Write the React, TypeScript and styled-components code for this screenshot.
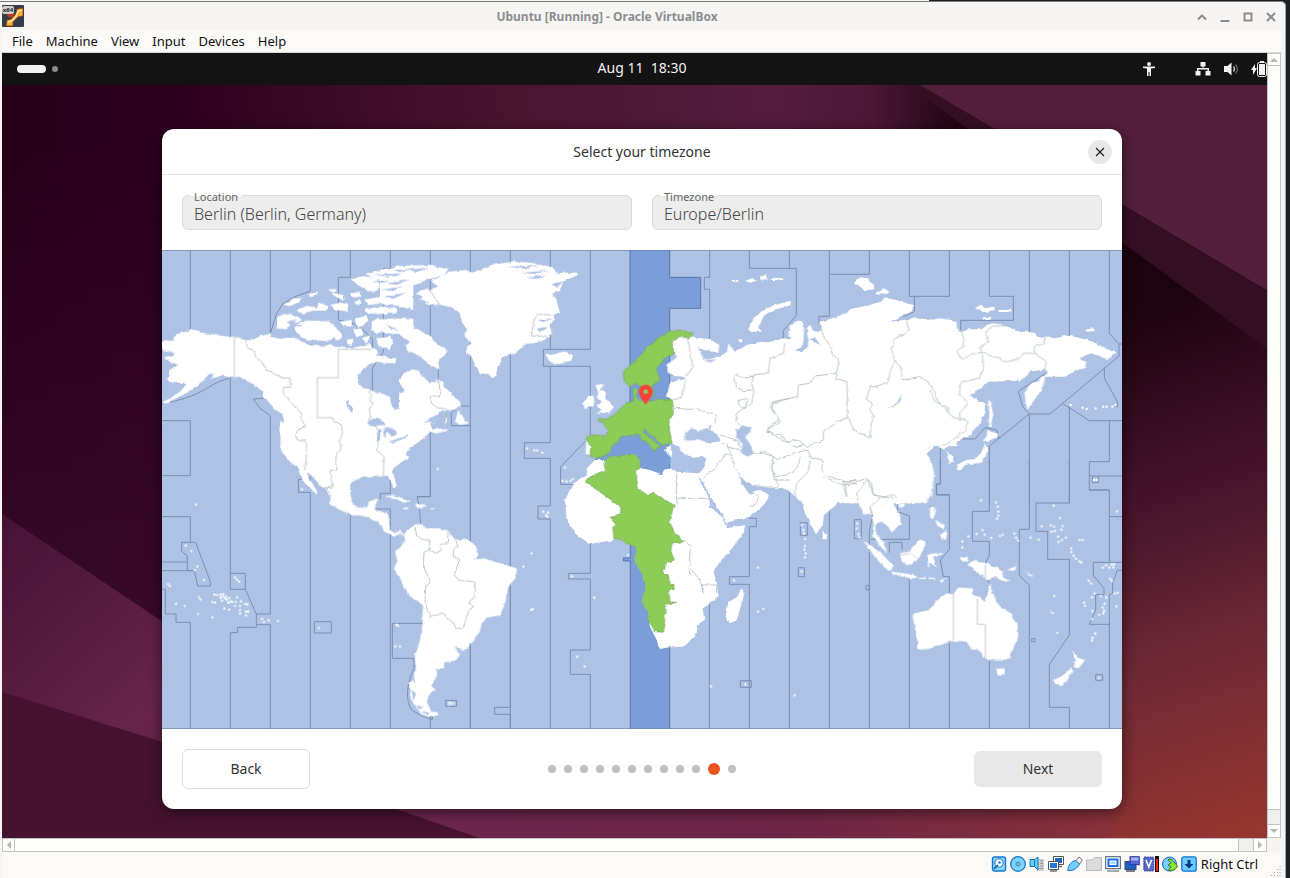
import React from "react";
import styled, { createGlobalStyle } from "styled-components";

const Global = createGlobalStyle`
  * { box-sizing: border-box; }
  html, body, #root { height: 100%; }
  body { margin: 0; background: #1d1f20; font-family: "Noto Sans", "Open Sans", sans-serif; }
  button, input { font: inherit; color: inherit; }
`;

const Backdrop = styled.div`
  min-height: 100vh;
  display: flex;
  padding: 1px 4px 0 0;
  background: linear-gradient(90deg, #f6f5f4 72%, #1d1f20 72%) top / 100% 1px no-repeat #1d1f20;
`;

const Window = styled.main`
  flex: 1;
  min-width: 0;
  display: flex;
  flex-direction: column;
  padding: 0 4px 0 2px;
  background: #f6f5f4;
  border-top: 1px solid #7b7b7a;
  border-right: 1px solid #a5a5a3;
  border-radius: 0 5px 0 0;
`;

const TitleBar = styled.header`
  height: 28px;
  display: grid;
  grid-template-columns: 80px 1fr 80px;
  align-items: center;
  padding-right: 3px;
  color: #8b8e8f;
`;

const AppIcon = styled.svg`
  width: 22px;
  height: 22px;
  display: block;
`;

const WindowTitle = styled.h1`
  margin: 0;
  font-size: 12px;
  line-height: 16px;
  font-weight: 700;
  text-align: center;
  padding: 2px 66px 0 0;
`;

const WindowButtons = styled.div`
  display: flex;
  justify-content: flex-end;
  gap: 9px;
  padding-top: 1px;
`;

const IconButton = styled.button<{ $size: number }>`
  width: ${(p) => p.$size}px;
  height: ${(p) => p.$size}px;
  flex: none;
  padding: 0;
  border: 0;
  background: none;
  display: grid;
  place-items: center;
  svg { display: block; width: 100%; height: 100%; }
`;

const MenuBar = styled.nav`
  height: 23px;
  display: flex;
  align-items: center;
  gap: 13px;
  padding-left: 10px;
  background: #fbfaf8;
  border-bottom: 1px solid #d5dad6;
  color: #111;
`;

const MenuItem = styled.button`
  border: 0;
  padding: 0;
  background: none;
  font-size: 13px;
  line-height: 18px;
`;

const Viewport = styled.div`
  flex: 1;
  display: grid;
  grid-template-columns: 1fr 14px;
  grid-template-rows: 1fr 14px;
`;

const Guest = styled.section`
  position: relative;
  overflow: hidden;
  min-width: 0;
  min-height: 0;
`;

const Screen = styled.div`
  width: calc(100% + 15px);
  height: calc(100% + 15px);
  display: flex;
  flex-direction: column;
`;

const TopBar = styled.div`
  height: 32px;
  flex: none;
  display: grid;
  grid-template-columns: 1fr auto 1fr;
  align-items: center;
  padding: 0 15px;
  background: #131313;
  color: #f2f2f2;
`;

const Workspaces = styled.div`
  display: flex;
  align-items: center;
  gap: 6px;
`;

const WorkspaceMark = styled.span<{ $active?: boolean }>`
  width: ${(p) => (p.$active ? 29 : 6)}px;
  height: ${(p) => (p.$active ? 8 : 6)}px;
  border-radius: 4px;
  background: ${(p) => (p.$active ? "#f2f2f2" : "#8a8a8a")};
`;

const Clock = styled.time`
  font-size: 14px;
  line-height: 20px;
  padding-bottom: 2px;
  white-space: pre;
`;

const Indicators = styled.div`
  display: flex;
  justify-content: flex-end;
  align-items: center;
  gap: 12px;
  svg { width: 16px; height: 16px; display: block; fill: #f2f2f2; }
  svg:first-child { margin-right: 26px; }
`;

const Desktop = styled.div`
  position: relative;
  flex: 1;
  display: flex;
  align-items: center;
  justify-content: center;
  background: #45132f;
`;

const Wallpaper = styled.svg`
  position: absolute;
  inset: 0;
  width: 100%;
  height: 100%;
`;

const Dialog = styled.form`
  position: relative;
  width: 75%;
  background: #fff;
  border-radius: 12px;
  color: #333;
  box-shadow: 0 3px 14px rgba(0, 0, 0, 0.55);
  overflow: hidden;
`;

const DialogHeader = styled.header`
  height: 46px;
  display: grid;
  grid-template-columns: 24px 1fr 24px;
  align-items: center;
  padding: 0 10px;
  border-bottom: 1px solid #e2e2e2;
`;

const DialogTitle = styled.h2`
  grid-column: 2;
  margin: 0;
  text-align: center;
  font-size: 14px;
  line-height: 20px;
  font-weight: 400;
`;

const CloseButton = styled(IconButton)`
  border-radius: 50%;
  background: #e8e8e8;
  svg { width: 10px; height: 10px; }
`;

const Fields = styled.div`
  display: grid;
  grid-template-columns: 1fr 1fr;
  gap: 20px;
  padding: 20px;
`;

const Field = styled.fieldset`
  position: relative;
  margin: 0;
  padding: 0;
  border: 0;
  height: 35px;
  min-width: 0;
`;

const FieldLabel = styled.label`
  position: absolute;
  left: 8px;
  top: -6px;
  padding: 0 4px;
  font-size: 11px;
  line-height: 16px;
  color: #666;
  background: linear-gradient(#fff 7px, transparent 7px);
`;

const FieldInput = styled.input`
  display: block;
  width: 100%;
  height: 35px;
  padding: 2px 11px 0;
  border: 1px solid #dadada;
  border-radius: 6px;
  background: #ededed;
  font-size: 16px;
  font-weight: 300;
  line-height: 20px;
  color: #444;
  outline: 0;
`;

const Map = styled.svg`
  display: block;
  width: 100%;
  height: auto;
`;

const Footer = styled.footer`
  height: 80px;
  display: grid;
  grid-template-columns: 128px 1fr 128px;
  align-items: center;
  padding: 0 20px;
`;

const ActionButton = styled.button<{ $filled?: boolean }>`
  height: ${(p) => (p.$filled ? 36 : 40)}px;
  border: ${(p) => (p.$filled ? "0" : "1px solid #dcdcdc")};
  border-radius: 6px;
  background: ${(p) => (p.$filled ? "#e8e8e8" : "#fff")};
  font-size: 14px;
  line-height: 20px;
`;

const Steps = styled.div`
  display: flex;
  justify-content: center;
  align-items: center;
  gap: 8px;
`;

const Step = styled.span<{ $current?: boolean }>`
  width: ${(p) => (p.$current ? 12 : 8)}px;
  height: ${(p) => (p.$current ? 12 : 8)}px;
  border-radius: 50%;
  background: ${(p) => (p.$current ? "#e95420" : "#c0c0c0")};
`;

const ScrollTrack = styled.div<{ $vertical?: boolean }>`
  display: flex;
  flex-direction: ${(p) => (p.$vertical ? "column" : "row")};
  background: #efefee;
  border: 1px solid #c3c3c2;
  min-width: 0;
`;

const ScrollThumb = styled.div`
  flex: 1;
  background: #fdfdfc;
`;

const ScrollGap = styled.div<{ $vertical?: boolean }>`
  flex: none;
  width: ${(p) => (p.$vertical ? "auto" : "16px")};
  height: ${(p) => (p.$vertical ? "16px" : "auto")};
  border: 0 solid #c3c3c2;
  border-width: ${(p) => (p.$vertical ? "1px 0" : "0 1px")};
`;

const ScrollArrow = styled.button<{ $dir: "up" | "down" | "left" | "right" }>`
  flex: none;
  width: 12px;
  height: 12px;
  padding: 0;
  border: 0 solid #c3c3c2;
  border-width: ${(p) => (p.$dir === "up" ? "0 0 1px" : p.$dir === "left" ? "0 1px 0 0" : "0")};
  background: #fdfdfc;
  display: grid;
  place-items: center;
  svg {
    width: 8px;
    height: 8px;
    fill: #b5b5b4;
    transform: rotate(${(p) => ({ up: 0, right: 90, down: 180, left: 270 })[p.$dir]}deg);
  }
`;

const StatusBar = styled.footer`
  height: 26px;
  display: flex;
  align-items: center;
  justify-content: flex-end;
  gap: 3px;
  padding: 0 0 2px 0;
  background: #fbfaf8;
  font-size: 13px;
  line-height: 18px;
  color: #111;
`;

const HostKey = styled.span`
  padding: 0 10px 0 1px;
`;

const Grip = styled.svg`
  width: 10px;
  height: 10px;
  align-self: flex-end;
`;

function Arrow({ dir, label }: { dir: "up" | "down" | "left" | "right"; label: string }) {
  return (
    <ScrollArrow type="button" $dir={dir} aria-label={label}>
      <svg viewBox="0 0 8 8"><path d="M0 6L4 2l4 4z" /></svg>
    </ScrollArrow>
  );
}

function Dots({ points }: { points: string }) {
  const d = points.trim().split(/\s+/).map((p) => `M${p}h0`).join("");
  return <path d={d} stroke="#fff" strokeWidth={7} strokeLinecap="round" fill="none" />;
}

const OCEAN = "#adc2e5";

function ZoneLines() {
  return (
    <g fill="none" stroke="#7c8fb2" strokeWidth={3}>
      <path d="M0 1H2880M0 1436H2880" />
      <g transform="translate(-6 0)">
        <path d="M91 0V242M211 0V260M331 0V250L350 190 368 162 400 142 451 123V0M571 0V82H535V210L575 218 605 235 637 268V298M691 0V55H670V305L637 355V420" />
        <path d="M6 462C60 450 100 440 140 415L180 393 211 384V970M6 512H91V677H6M280 447L300 475 331 497V1092M280 447L310 445M451 660V688H415V727H451V1437M6 282L30 270" />
      </g>
      <g transform="translate(-6 690)">
        <path d="M6 110H91V187M65 187H107L151 305V318H113L103 272H82V228L65 213ZM6 246H82M6 272H103M6 328H16V402H48V427H91V747M211 280H256V328H211V280M256 328L289 402H331M289 402V434H331V747M289 434V442H233V458H211V747M463 425H514V459H463ZM571 98V747M691 0V40H661V58M640 87H691V747M811 0V50H771L778 80 782 135M811 705V747M931 0V185M931 480V747M1051 0V260M1051 320V682H1004V703H1051V747M790 430H697V535H762V565C740 610 735 660 755 690L790 710 817 718V705M857 661H890V679H857Z" />
      </g>
      <g transform="translate(654 0)">
        <path d="M151 0V290M175 290V400M271 0V1437M391 0V1437M511 0V298M631 0V298H490V349H631V560M511 349V578H433V625H511V768M271 468H243M243 460L214 490V527H271M620 570L542 650V703H580M151 545V740H112" />
      </g>
      <g transform="translate(1224 0)">
        <path d="M419 0V82H403V118H419V270M538 0V55H660" />
      </g>
      <g transform="translate(1794 0)">
        <path d="M88 0V55H109V197L70 242V268M208 0V73H328V0M208 73V199H177V222M448 0V139H568V0M463 139V185L430 200" />
      </g>
      <g transform="translate(2304 0)">
        <path d="M178 0V139H250V211H92V240M298 0V245M418 0V262M538 0V250L567 282V318L360 492H298L278 470 265 424 350 368M567 282H576M523 352V384L562 455V472M400 462L478 512H576M538 512V635H478V720H538M478 678H576M487 678V698H505V678M418 470V760M298 492V760M298 492L178 588V760M208 565L200 540 165 533 135 567H82M31 590V702H20V735H58" />
      </g>
      <g transform="translate(1134 570)">
        <path d="M31 198H-6V237H31V867M151 310V400H85V417H151V630H91V703H151V867M508 480V867M628 130V145M628 235H649V260H628V410H568V433H628V867M748 150V867M868 200V867M781 248h21v38h-21zM775 383h18v27h-18zM601 722h33v20h-33z" />
      </g>
      <g transform="translate(2004 630)">
        <path d="M128 165L118 215V807M73 179h21v57h-21zM108 377h10v12h-10zM203 118V155L238 168V238H122M178 278V247H216V270M238 355V807M331 0V72H319V104H358V268L331 300 340 350H358V400M358 550V807M478 0V154H427V244H478V285L466 310V350L478 370M478 600V807M598 0V208H568V346L598 376V807M718 0V129H618V214H653V298H718V525L658 614V742H718V807M838 90V307M778 90H838M838 170H876M876 307H790V346L822 385V404H797V450L778 493H838M876 331H862L848 370V400L838 404V807M605 536h10v9h-10zM797 644h21v17h-21z" />
      </g>
    </g>
  );
}

function WorldMap() {
  return (
    <Map viewBox="0 0 2880 1437" role="img" aria-label="World map with time zones">
      <defs>
        <filter id="coast" filterUnits="userSpaceOnUse" x="0" y="0" width="2880" height="1437">
          <feTurbulence type="fractalNoise" baseFrequency="0.06" numOctaves={2} seed={4} />
          <feDisplacementMap in="SourceGraphic" scale={10} xChannelSelector="R" yChannelSelector="G" />
        </filter>
      </defs>
      <rect width="2880" height="1437" fill={OCEAN} />
      <ZoneLines />
      <path fill="#7b9ed8" stroke="#506f9f" strokeWidth={2.6} d="M1404 0H1523V82H1616V175H1523V1437H1405V933H1384V924H1405V885L1404 720 1300 628 1404 520Z" />
      <path fill="#7b9ed8" d="M1298 628L1340 600 1364 555H1525V640L1500 676 1420 655Z" />

      <g filter="url(#coast)">
        <g fill="#fff">
          <g transform="translate(-6 0)">
            <path d="M0 282L20 272 40 268 50 252 68 248 82 243 100 238 115 246 140 250 165 254 190 258 212 260 235 262 262 272 280 268 300 258 330 252 340 262 360 266 400 262 430 275 450 288 470 284 490 290 510 282 525 290 560 294 600 290 625 282 637 290 650 300 655 310 640 325 625 345 605 362 595 375 592 392 602 408 625 418 650 428 670 432 690 440 693 462 705 478 718 476 722 460 720 445 728 420 722 390 735 372 760 356V585L742 598 738 615 745 622 720 640 700 655 697 665 705 690 710 708 703 714 695 700 688 685 680 678 665 680 650 676 630 682 610 680 585 688 572 700 570 720 572 760H520L510 740 495 715 475 700 455 675 440 668 448 685 460 705 472 725 470 733 450 712 435 700 425 680 410 650 390 635 370 610 360 590 362 560 358 540 362 510 370 520 372 508 365 490 345 478 330 460 312 440 308 425 290 410 262 392 238 380 212 382 185 376 150 388 165 372 150 370 125 395 110 408 85 425 60 440 12 462 8 456 30 445 60 425 78 404 70 398 38 398 18 388 30 380 28 360 55 345 30 335 12 322 40 318 45 308 10 300Z" />
            <path d="M350 235L352 200 375 192 400 197 422 207 418 215 395 222 375 238ZM400 228L430 212 480 212 510 215 530 235 545 252 540 270 520 262 500 275 470 270 450 272 425 262 410 248ZM370 165L400 145 425 145 415 158 390 168ZM408 182L440 168 470 172 480 158 505 170 500 182 460 182 430 190ZM445 132L470 125 472 135 450 142ZM507 115L530 118 528 125 510 122ZM515 128L550 135 555 148 525 142ZM510 165L540 158 568 165 565 185 530 180ZM580 155L600 150 605 160 585 165ZM540 215L575 210 575 230 550 228ZM585 205L620 198 625 212 600 232 588 225ZM580 240L605 235 610 255 590 262ZM560 270L580 265 575 285 562 282ZM605 265L632 255 620 280ZM575 88L610 78 650 85 662 110 640 128 610 115 590 102ZM570 130L600 125 605 140 575 142ZM615 175L670 170 712 175 705 190 650 192 615 188ZM610 150L660 140 665 160 625 165ZM620 70L680 58 760 44V180L700 165 680 130 660 90 630 80ZM635 215L655 203 668 215 670 240 650 252 635 238ZM675 215L700 205 760 206V255L735 240 700 245 680 235ZM650 265L690 260 700 280 690 300 655 290ZM600 335L640 315 680 320 690 340 650 335 620 345Z" />
          </g>
          <g transform="translate(654 0)">
            <path d="M60 390L70 370 95 358 115 362 130 380 150 400 168 395 175 385 190 405 205 425 240 455 243 465 225 478 180 485 160 500 130 520 180 505 200 500 205 515 190 522 150 518 160 540 180 535 205 540 170 550 150 545 125 570 95 590 80 605 60 640 50 580ZM225 515L235 480 245 495 265 520 240 525Z" />
            <path d="M0 60L60 48 150 45 205 58 190 75 140 90 95 110 90 125 60 130 50 150 70 158 20 165 0 160ZM0 175L50 178 50 190 0 190ZM0 208L40 205 70 225 110 238 155 260 160 275 205 302 190 320 175 330 178 358 150 345 120 320 95 305 75 290 90 275 60 255 30 250 0 245ZM75 285L95 290 110 310 85 305ZM0 320L50 325 45 340 0 335Z" />
            <path d="M150 92L175 82 205 65 260 60 270 70 300 58 350 42 400 35 460 38 510 50 530 68 590 68 595 74 570 85 550 95 540 120 520 130 530 150 540 190 515 195 525 205 510 225 515 250 500 265 470 278 432 282 420 298 405 308 390 315 370 320 355 350 345 380 335 382 325 372 300 370 285 345 275 320 262 310 260 290 275 280 250 255 262 240 245 215 240 190 220 172 180 165 145 165 115 148 130 140 108 132 125 120 148 118 175 110Z" />
            <path d="M498 310L515 315 530 308 560 305 580 318 570 332 540 342 515 338 500 325Z" />
          </g>
          <g transform="translate(-6 690)">
            <path d="M445 -20L500 25 515 50 508 70 540 90 580 105 615 108 640 122 655 125 665 145 685 160 705 168 720 160 733 168 735 185 705 215 712 240 702 265 720 295 745 345 788 372 788 430 780 480 765 530 768 570 758 600 748 610 750 650 765 680 780 700 810 712 838 703 812 690 800 665 810 640 825 628 812 612 830 598 832 565 852 565 852 548 885 542 898 525 885 500 905 510 925 505 940 480 960 455 965 430 985 412 1020 405 1035 370 1045 320 1070 290 1068 268 1045 255 1000 245 965 232 940 238 955 225 948 200 930 180 885 178 862 150 840 145 800 145 785 135 765 132 745 150 730 162 720 152 705 160 690 150 688 130 685 105 665 95 645 90 645 80 655 62 650 55 628 65 620 84 590 82 575 60 568 30 570 -20Z" />
            <path d="M677 50L700 45 725 55 755 68 730 68 705 55ZM765 72L785 70 803 80 785 85 770 82ZM728 83h14v4h-14zM812 82h12v4h-12zM865 668h20v6h-20z" />
          </g>
          <g transform="translate(1224 0)">
            <path d="M75 405L100 402 90 420 108 430 105 445 120 462 132 470 120 485 80 492 95 478 82 470 95 455 80 440 85 425ZM40 460L55 440 72 440 72 465 45 478Z" />
            <path d="M290 272L340 258 372 262 420 268 448 285 445 305 400 300 385 292 400 330 430 325 470 310 475 280 485 295 495 305 530 285 570 275 600 278 640 265 670 270V700L590 675 505 672 470 690 385 675 400 655 407 622 375 622 345 618 332 605 325 592 310 588 305 605 315 612 300 622 285 600 300 585 296 540 305 450 288 440 302 395 345 388 345 380 310 378 293 370 292 345 322 320 312 310 305 280Z" />
            <path d="M535 235L555 200 590 172 640 158 662 152 662 166 620 178 580 200 565 235 575 245 545 245ZM485 90h20v5h-20zM525 92L550 84 560 92 540 98ZM570 80L590 72 590 88 572 90ZM600 90h40v-6h-30zM505 268h12v6h-12z" />
            <path d="M48 572L64 575 62 615 48 612Z" />
          </g>
          <g transform="translate(1794 0)">
            <path d="M-20 285L30 275 70 268 95 290 100 280 85 250 90 225 115 210 130 215 132 250 128 290 105 300 125 308 140 290 150 270 180 285 165 262 145 270 140 235 150 225 165 250 185 240 178 215 200 210 245 195 270 178 330 165 375 150 400 148 460 165 455 185 430 195 390 215 470 205 530 210 590 215V590L525 583 490 600 525 585 500 612 515 640 522 670 520 710 500 760H130L95 725 85 715 -20 712Z" />
            <path d="M280 100L300 82 325 85 328 95 345 105 345 118 315 120ZM345 132L370 115 390 125 360 134ZM355 158L375 142 400 150 380 160Z" />
          </g>
          <g transform="translate(2304 0)">
            <path d="M-20 215L30 205 65 210 80 235 95 245 110 238 155 238 170 225 190 220 230 228 260 243 315 248 320 260 375 265 400 255 440 262 490 275 530 298 557 308 530 330 510 318 480 310 450 325 465 335 470 352 445 360 400 380 345 380 340 410 320 440 292 480 283 430 300 405 340 380 352 365 345 358 300 365 270 392 175 395 150 415 120 438 150 455 168 460 165 490 150 520 120 555 90 570 60 585 40 600 72 620 72 635 55 638 50 610 35 595 15 588 -20 590Z" />
            <path d="M175 450L182 455 190 495 182 530 175 528 178 490ZM172 540L205 552 200 562 170 575 158 572 170 560ZM165 580L172 600 165 625 130 638 100 645 90 660 80 645 110 630 135 628 155 605ZM135 175L150 165 165 175 190 170 195 180 160 187ZM205 180h38v6h-38zM158 202h25v7h-25zM468 240L485 235 495 242 475 245Z" />
          </g>
          <g transform="translate(1134 570)">
            <path d="M165 60L195 60 210 50 290 43 298 60 300 85 330 90 365 103 372 90 395 85 410 95 470 100 490 98 488 120 475 112 490 145 508 175 510 200 550 235 560 265 615 255 612 275 580 320 540 365 520 395 530 425 535 465 510 490 488 505 493 540 472 555 465 590 430 620 388 622 360 627 350 600 330 560 325 520 305 485 318 435 305 400 285 365 288 320 260 310 240 297 190 305 150 312 110 285 80 240 75 180 100 130 135 110 140 85Z" />
            <path d="M486 118L478 100 500 85 540 40 590 40 600 105 610 120 625 150 640 155 660 148 687 165 680 185 655 210 628 230 560 248 550 230 525 190 505 160Z" />
            <path d="M560 0H900V185L852 225 848 255 828 283 795 220 785 182 760 165 740 147 660 140 620 130 595 105 560 60ZM605 445L612 465 590 540 570 550 557 530 565 485 590 472ZM848 272L862 285 858 298 848 298Z" />
          </g>
          <g transform="translate(2004 630)">
            <path d="M-20 -10L295 -10 310 40 300 70 270 100 240 108 200 115 185 125 210 165 212 190 185 218 175 200 155 185 140 190 135 210 150 235 165 260 172 278 150 260 130 225 128 165 100 160 85 125 60 105 40 118 -20 155Z" />
            <path d="M100 243L125 258 165 290 187 318 185 332 160 320 130 285ZM187 335L230 342 265 350 250 355 190 345ZM210 280L240 272 270 238 288 245 280 270 262 300 240 314 215 305ZM292 285L320 278 345 280 310 290 320 325 305 308 295 325ZM298 90L310 92 305 110ZM208 130L222 130 220 142 210 142ZM300 145L312 142 316 160 308 178 300 172ZM330 225L348 212 350 238 335 238ZM315 182L345 192 340 210 322 195ZM328 362L352 352 335 368ZM268 353h18v4h-18zM295 353h20v4h-20zM385 292L412 292 415 305 395 302ZM412 315L430 302 475 312 520 335 522 352 542 366 515 362 495 350 475 360 450 345 430 325ZM530 330L560 318 552 332ZM655 450L672 460 668 463ZM580 330L610 348 605 350Z" />
            <path d="M380 25L420 0 460 -5 455 8 405 14 392 32Z" />
            <path d="M248 470L250 460 300 450 325 418 352 398 368 405 385 382 430 385 425 402 465 425 478 372 495 415 510 440 535 455 562 490 565 530 540 590 515 602 470 600 440 565 425 570 410 545 370 542 340 552 290 568 265 568 258 520ZM497 625L523 625 520 642 508 648ZM725 570L745 592 765 600 745 627 730 620 738 600ZM722 622L730 635 700 675 675 672 672 660 700 645Z" />
          </g>
        </g>

        <g fill={OCEAN}>
          <g transform="translate(-6 0)">
            <path d="M620 520L640 505 665 508 678 525 655 526 630 528ZM655 535L650 575 660 570 662 540ZM667 538L680 530 705 540 712 552 695 560 683 545 675 565ZM685 575L725 562 748 552 735 565 700 577ZM558 455L565 450 570 465 580 480 575 488 562 470Z" />
            <path d="M630 95L690 90 670 98ZM660 120L730 110 700 122ZM640 75L720 70 690 80ZM670 140L740 128 700 146ZM700 60L760 56 720 66ZM380 215L410 210 400 222 430 226 400 232ZM255 395L300 425 305 440 285 425ZM330 470L360 495 350 495Z" />
          </g>
          <g transform="translate(654 0)">
            <path d="M10 75L70 70 40 80ZM20 100L90 88 50 104ZM80 60L150 52 110 66ZM420 68L510 62 460 72ZM380 50L480 46 430 56ZM440 82L500 75 470 88ZM515 100L550 95 530 112ZM470 210L520 205 490 216ZM470 235L510 230 480 244ZM20 225L60 240 30 235ZM40 395L60 405 75 420 60 430 45 425 55 410 40 405ZM150 515L205 495 190 528ZM115 145L150 158 130 158Z" />
          </g>
          <g transform="translate(1224 0)">
            <path d="M342 570L345 550 365 535 385 545 405 535 425 540 450 565 450 578 420 580 390 570 365 572ZM415 530L425 522 420 540ZM498 540L520 528 545 530 540 550 525 560 545 590 550 612 530 620 512 605 515 580 500 560ZM588 545L600 540 596 550ZM305 600L330 590 330 622 305 632ZM505 672L530 700 590 712 560 722 540 735 515 700ZM400 330L440 328 420 338Z" />
          </g>
          <path transform="translate(1794 0)" d="M380 475L400 468 415 450 427 432 422 452 400 472Z" />
          <g transform="translate(-6 690)">
            <path d="M756 600L764 570 766 610ZM755 630L768 640 760 665ZM768 675L790 680 778 688ZM782 694L810 698 800 704Z" />
          </g>
          <g transform="translate(1134 570)">
            <path d="M487 430L490 460 486 450ZM445 380L452 400 460 412 448 402ZM390 0L425 40 500 45 492 85 470 95 415 88 395 50Z" />
          </g>
        </g>
        <path transform="translate(1134 570)" fill="#fff" d="M423 25L430 12 470 6 505 10 560 0 560 60 520 70 498 85 500 50 470 52 435 45Z" />

        <g fill="#8ccd58" stroke="#75a35c" strokeWidth={2} strokeLinejoin="round">
          <g transform="translate(1224 0)">
            <path d="M60 620L62 590 50 575 48 558 70 555 108 558 112 540 100 520 82 510 90 505 110 508 130 495 155 475 165 460 190 455 192 440 185 425 195 410 203 420 198 440 210 450 235 455 270 447 308 450 310 485 300 510 298 540 303 560 303 580 285 583 275 585 262 570 240 555 222 535 218 545 235 560 255 575 272 590 262 592 255 605 250 595 235 580 210 565 205 550 185 555 150 560 145 575 125 590 115 610 90 622Z" />
            <path d="M160 365L200 330 235 290 265 262 300 243 340 240 370 252 355 268 330 258 305 275 312 300 308 315 285 320 272 345 258 355 270 390 250 405 250 440 228 440 210 405 195 400 180 408 162 395Z" />
          </g>
          <path transform="translate(1134 570)" d="M195 60L210 50 290 43 298 60 300 85 290 90 290 145 320 163 340 160 402 195 388 245 403 275 430 305 395 312 393 335 403 360 380 368 370 398 385 405 388 433 402 433 402 448 386 450 390 485 410 487 378 492 378 520 371 525 371 577 345 575 325 540 325 520 305 485 318 435 305 400 285 365 288 320 260 310 240 297 222 298 218 262 228 255 210 232 240 225 243 200 140 128 142 115 195 90Z" />
        </g>

        <g fill="none" stroke="#aebabb" strokeWidth={2.4} strokeLinejoin="round">
          <path transform="translate(-6 0)" d="M258 272L262 295 280 300 290 325 310 340 320 360 355 378 363 384H391V412H370V430L400 465 420 485 425 510 437 530 415 538 407 555 412 570H439V625L434 660M517 503L522 515 545 525 547 550 540 570 542 600 528 615V660H512V685L520 710 495 715M631 420V450L640 458 628 480 632 505 622 520M650 528L655 580 650 600 672 620 670 680" />
          <path transform="translate(654 0)" d="M148 118L178 165M515 195L475 192 460 215 455 258 500 258M175 385L178 405 182 440 150 440 155 460 170 472 200 478 203 520" />
          <path transform="translate(-6 690)" d="M765 140L770 165 785 178 808 180V210L792 215 790 260 810 300 808 312 797 318 795 370 808 408 850 402 880 430 888 445H910L925 395 943 380 928 370 945 345 945 305 895 300 883 285 897 240 880 228V205L895 200 885 178M808 210L825 220 845 210 840 195 862 190 865 150M520 10L500 25 515 50" />
          <path transform="translate(1224 0)" d="M348 262L358 285 360 315 370 350 350 378M345 388L343 410 335 445 310 448M310 475L360 478 375 472 395 485 438 495 435 520M645 278L640 310 600 325 595 368 552 375 545 400 552 425 545 460 500 490 498 515 515 530M552 378L520 385 500 372 492 385 497 410 520 422 548 420M660 445L608 460 605 480 630 510 600 525 590 545 620 560 660 580M450 555L505 572 510 590M455 580L470 585 485 615 465 612 445 640 430 660 400 685M470 590L510 600M485 615L492 650 510 675M550 610L590 605 610 620 605 655 615 690 660 690M508 450L535 445 525 475 505 465Z" />
          <path transform="translate(1794 0)" d="M180 225L195 270 210 285 215 310 235 330 232 370 165 378 150 400 115 405 112 440 38 455 35 475 60 515 20 540M232 370L228 385 260 395 262 440 260 480 265 500 250 505 190 545V570L140 590 115 570 85 575 60 555 20 545M265 500L280 540 330 563 332 530 340 500 330 480 338 460 318 448 332 410 355 408 385 395 390 365 405 335 420 345 428 390 475 380 505 395 525 430 535 455 565 485M435 200L448 240 405 265 395 300 400 330 410 335M0 605L40 620 50 628 120 605 145 600 150 620 188 630 185 660 200 675 250 695 290 695 320 685 335 715 340 735 400 745M40 620L35 655 45 680 80 675 115 650 120 620M150 630L145 665 110 700 105 740M190 680L250 705 290 700M45 680L55 710 0 712M100 590L130 585" />
          <path transform="translate(2304 0)" d="M92 240L102 270 98 290 80 305 98 328 130 310 155 308 150 290 178 275 168 250 185 228 240 228M155 308L230 335 265 328 280 310 315 310 312 290 345 280 345 262M315 310L350 335 345 360M158 315L160 350 148 385 95 395 88 430 115 460 88 490 92 508 115 512 105 540 75 565M0 420L15 455 50 470 65 500 92 508M75 568L35 590" />
          <path transform="translate(1134 570)" d="M410 95V175H508M410 175V195M430 305L455 318 448 350 452 385 475 415 485 435 530 435 530 460M485 435L490 460M602 115L625 150 655 170 650 190 628 200" />
          <path transform="translate(1794 690)" d="M250 0V20L260 50M260 10L290 0" />
          <path transform="translate(2004 630)" d="M45 62L50 110M85 125L80 100 110 60 125 70 128 100 150 115 190 103 200 115M128 165L120 140 150 115M212 285L245 280 262 295M120 140L130 200" />
        </g>
      </g>

      <path fill="none" stroke="#b4bfbe" strokeWidth={2.4} d="M217 262V380M631 298H529V383H466V503H511M2374 1032V1172M2446 1045V1123H2470V1228M2470 945V988" />

      <g transform="translate(-6 690)">
        <Dots points="108,73 77,197 94,213 112,259 104,270 132,300 24,312 30,318 48,371 74,378 114,402 157,412 116,351 121,358 157,366 165,368 163,344 171,345 181,344 190,342 182,353 189,349 195,355 186,362 201,359 208,354 212,364 198,350 205,368 217,366 227,366 231,352 225,378 243,364 240,378 255,372 262,373 193,385 207,389 240,390 258,395 265,394 240,400 258,406 225,292 231,299 238,305 306,417 312,426 326,421 354,423 477,444 426,28 710,434 714,438 706,499 720,499 1090,260 1115,220 1114,389 1119,387" />
      </g>
      <g transform="translate(654 0)">
        <Dots points="441,595 463,601 472,601 487,608 555,653 173,657" />
      </g>
      <g transform="translate(1134 570)">
        <Dots points="264,345 96,409 163,473 111,650 134,679 513,739 616,733 582,421 654,383 654,514 670,507 785,255 790,270 792,280 795,297 795,318 793,328 797,340 795,352 785,394 764,766 68,122 80,124 92,122 99,117 10,215 18,225 24,218 22,230" />
      </g>
      <g transform="translate(2304 0)">
        <Dots points="422,465 458,473 470,477 497,475 520,470 530,470 547,470 556,464 492,690 500,690" />
      </g>
      <g transform="translate(2004 630)">
        <Dots points="453,121 498,127 503,140 505,155 505,167 501,176 457,210 464,224 440,222 415,229 397,244 397,262 484,234 510,228 518,224 553,220 558,233 564,241 602,233 626,239 635,199 671,137 690,174 662,196 672,200 698,198 665,215 675,213 694,209 684,230 708,233 686,246 696,240 724,265 724,276 731,287 738,296 748,304 754,307 749,240 758,240 861,154 818,323 828,316 838,323 845,314 850,322 852,313 776,362 783,370 840,356 845,362 794,400 786,412 812,408 829,412 854,400 863,398 859,439 762,428 765,438 824,431 818,442 822,452 820,460 787,453 807,465 786,477 796,521 788,533 786,541 682,519 673,408 807,654 82,190 80,205 85,222 89,232" />
      </g>

      <path fill="#7b9ed8" d="M1428 437L1440 410 1457 430 1452 448 1430 452Z" />
      <path fill="#f44336" fillRule="evenodd" d="M1451 464C1438 446 1430 436 1430 425a21 21 0 1 1 42 0c0 11-8 21-21 39zM1451 432a7 7 0 1 0 0-14a7 7 0 1 0 0 14z" />
      <circle cx="1451" cy="425" r="7" fill="#8ccd58" />
    </Map>
  );
}

function DesktopArt() {
  return (
    <Wallpaper viewBox="0 85 1280 768" preserveAspectRatio="none" aria-hidden="true">
      <defs>
        <linearGradient id="base" x1="0" y1="0" x2="1" y2="0">
          <stop offset="0" stopColor="#260019" />
          <stop offset=".12" stopColor="#2b001d" />
          <stop offset=".4" stopColor="#48152f" />
          <stop offset=".6" stopColor="#551c3e" />
          <stop offset=".68" stopColor="#4d1736" />
          <stop offset=".73" stopColor="#2a0a1b" />
          <stop offset=".77" stopColor="#170009" />
          <stop offset="1" stopColor="#1c0310" />
        </linearGradient>
        <linearGradient id="warm" x1="1060" y1="330" x2="1230" y2="853" gradientUnits="userSpaceOnUse">
          <stop offset="0" stopColor="#1c0310" />
          <stop offset=".35" stopColor="#45142b" />
          <stop offset=".65" stopColor="#702936" />
          <stop offset="1" stopColor="#983730" />
        </linearGradient>
        <linearGradient id="floor" x1="360" y1="0" x2="1130" y2="0" gradientUnits="userSpaceOnUse">
          <stop offset="0" stopColor="#6c254e" />
          <stop offset=".55" stopColor="#6d2546" />
          <stop offset="1" stopColor="#89323a" />
        </linearGradient>
        <linearGradient id="beam" x1="0" y1="0" x2="1" y2="1">
          <stop offset="0" stopColor="#451235" />
          <stop offset=".5" stopColor="#672449" />
          <stop offset="1" stopColor="#61203f" />
        </linearGradient>
        <linearGradient id="shade" x1="0" y1="0" x2="0" y2="1">
          <stop offset="0" stopColor="#401033" stopOpacity="0" />
          <stop offset="1" stopColor="#401033" stopOpacity=".7" />
        </linearGradient>
      </defs>
      <rect y="85" width="1280" height="768" fill="url(#base)" />
      <rect y="140" width="170" height="600" fill="url(#shade)" />
      <path d="M300 760H1140V853H300z" fill="url(#floor)" />
      <path d="M1110 230L1280 350V853H1110z" fill="url(#warm)" />
      <path d="M918 85L1280 299V360L906 85z" fill="#340f22" />
      <path d="M918 85H1280V299z" fill="#541f3c" />
      <path d="M0 514L170 628V745L350 800V853H0z" fill="url(#beam)" />
      <path d="M0 692L170 745 340 790 520 853H0z" fill="#45122f" />
    </Wallpaper>
  );
}

const blueBox = { fill: "#dff2ff", stroke: "#1674d1", strokeWidth: 1.4 };

function StatusIcons() {
  const icons: [string, React.ReactNode][] = [
    ["Hard disks", <><rect x="1.5" y="1" width="13" height="14" rx="2" {...blueBox} fill="#8bd6ff" /><circle cx="8" cy="7" r="4.2" fill="#fff" stroke="#1674d1" /><circle cx="8.5" cy="6.5" r="1.3" fill="#1674d1" /><path d="M3 13l4-4" stroke="#0b4fa0" strokeWidth="1.6" /></>],
    ["Optical drives", <><circle cx="8" cy="8" r="7.3" fill="#7fd4ff" stroke="#1976c9" strokeWidth="1.3" /><circle cx="8" cy="8" r="2" fill="#d8f2ff" stroke="#1976c9" /><circle cx="8" cy="8" r=".7" fill="#084a93" /></>],
    ["Audio", <><path d="M9 3h6v12H7l2-3z" fill="#d0d0d0" /><path d="M11 5h3M11 7.500h3M11 10h3M10 12.500h4" stroke="#999" /><path d="M1 3.500h4.500L9 1v13l-3.500-3.500H1z" fill="#69ccff" stroke="#1674b9" /><path d="M5.500 3.500v7" stroke="#1674b9" /></>],
    ["Network", <><path d="M5.500.5h10v8h-10z" fill="#fff" stroke="#555" /><path d="M7 2h7v5H7z" fill="#1b66d0" /><path d="M8 10.500h6" stroke="#666" strokeWidth="1.4" /><path d="M.5 5.500h10v8H.5z" fill="#fff" stroke="#555" /><path d="M2 7h7v5H2z" fill="#1f78dc" /><path d="M2 15h7" stroke="#666" strokeWidth="1.4" /></>],
    ["USB", <><path d="M.8 14.500C1 9 4.500 5 9 4.500l3.500 3.500c-2 4-5.500 7-11.700 6.500z" fill="#71cfff" stroke="#1674d1" /><path d="M9 4.500L12 1l3.500 3-3 4z" fill="#f3f3f3" stroke="#777" /></>],
    ["Shared folders", <><path d="M.5 4h6l2-2.500h7v13H.5z" fill="#dcdcdc" stroke="#bbb" /></>],
    ["Display", <><rect x=".7" y=".7" width="14.600" height="12" fill="#fff" stroke="#456" /><rect x="2.500" y="2.500" width="11" height="8.500" fill="#1b6fe0" /><rect x="5" y="5" width="6" height="3.500" fill="#9fdcff" stroke="#fff" /><path d="M2 15h12" stroke="#789" strokeWidth="1.4" /></>],
    ["Recording", <><rect x="1" y="5.500" width="11" height="8" fill="#1b62c8" stroke="#446" /><path d="M2 15h9" stroke="#556" strokeWidth="1.5" /><rect x="6" y=".7" width="9.300" height="8" fill="#5867d8" stroke="#2b3a98" /><path d="M7 1.500h7.500v3H7z" fill="#a8b0f6" /></>],
    ["Virtualization", <><rect x=".8" y="1" width="10" height="14" rx="1" fill="#5668c8" stroke="#2b3585" strokeDasharray="1.500 1" /><path d="M3 4l2.800 7L8.500 4" fill="none" stroke="#fff" strokeWidth="1.600" /><path d="M12 0h4v16h-4z" fill="#111" /><path d="M13 3h2v12h-2z" fill="#f3220c" /></>],
    ["Mouse integration", <><circle cx="7.500" cy="8" r="7" fill="#74ceff" stroke="#1769b8" /><path d="M6 3.500l3-.5 2 2.500 2 1.500 2.500 3-2.500 3.500-4 1.500-2.500-1L9 11 6 9l3-2z" fill="#8be33b" stroke="#347a17" /></>],
    ["Keyboard", <><rect x=".8" y=".8" width="14.400" height="14.400" rx="2" fill="#6dccff" stroke="#1674d1" strokeWidth="1.300" /><path d="M6.500 4h3v4h3L8 12.500 3.500 8h3z" fill="#083a80" /></>],
  ];
  return (
    <>
      {icons.map(([label, art]) => (
        <IconButton key={label} type="button" $size={16} aria-label={label}>
          <svg viewBox="0 0 16 16">{art}</svg>
        </IconButton>
      ))}
    </>
  );
}

export default function App() {
  return (
    <Backdrop>
      <Global />
      <Window>
        <TitleBar>
          <AppIcon viewBox="0 0 22 22" aria-hidden="true">
            <rect width="22" height="22" rx="1" fill="#343b49" />
            <path d="M5 9h8l-2 4-5-1z" fill="#b83b16" />
            <path d="M21 3v8l-5 1-5 5v4H4l1-6 5-1 4-5 1-5z" fill="#f8b13c" stroke="#8c360a" strokeWidth=".8" />
            <path d="M20 5l-4 1-2 5-5 5-3 1" fill="none" stroke="#ffe3a0" strokeWidth="1.500" />
            <rect x="0" y="1" width="12" height="8" rx="2" fill="#cfcfcd" />
            <text x="6" y="7" fontSize="6" fontWeight="700" textAnchor="middle" fill="#222">x64</text>
          </AppIcon>
          <WindowTitle>Ubuntu [Running] - Oracle VirtualBox</WindowTitle>
          <WindowButtons>
            {[
              ["Shade", "M3 9.500l4-4 4 4"],
              ["Minimize", "M2.500 11h9"],
              ["Maximize", "M3.500 3.500h7v7h-7z"],
              ["Close", "M3 3l8 8M11 3l-8 8"],
            ].map(([label, d]) => (
              <IconButton key={label} type="button" $size={14} aria-label={label}>
                <svg viewBox="0 0 14 14"><path d={d} fill="none" stroke="#8b8e8f" strokeWidth="2" /></svg>
              </IconButton>
            ))}
          </WindowButtons>
        </TitleBar>
        <MenuBar>
          {["File", "Machine", "View", "Input", "Devices", "Help"].map((m) => (
            <MenuItem key={m} type="button">{m}</MenuItem>
          ))}
        </MenuBar>
        <Viewport>
          <Guest>
            <Screen>
              <TopBar>
                <Workspaces><WorkspaceMark $active /><WorkspaceMark /></Workspaces>
                <Clock>Aug 11  18:30</Clock>
                <Indicators>
                  <svg viewBox="0 0 16 16" aria-label="Accessibility"><circle cx="8" cy="3" r="2" /><path d="M2 5.500h12v1.500l-4 .5V15H8.500v-4h-1v4H6V7.500L2 7z" /></svg>
                  <svg viewBox="0 0 16 16" aria-label="Network"><path d="M5.500 1h5v4.500h-2V7H14v3h1.500v4.500H10.500V10h2V8.500h-9V10h2v4.500H.5V10H2V7h5.500V5.500h-2z" /></svg>
                  <svg viewBox="0 0 16 16" aria-label="Volume"><path d="M1 5h3.500L8.500 1.500v13L4.500 11H1z" /><path d="M10.500 5.500q2 2.500 0 5" fill="none" stroke="#ccc" strokeWidth="1.300" /><path d="M12.500 3.500q4 4.500 0 9" fill="none" stroke="#666" strokeWidth="1.300" /></svg>
                  <svg viewBox="0 0 16 16" aria-label="Battery"><path d="M4 3v4h2l-4 7V9H0z" /><rect x="6.500" y="1.500" width="9" height="14" rx="2" fill="none" stroke="#f2f2f2" /><path d="M9 0h4v2H9zM8 3h6v11H8z" /></svg>
                </Indicators>
              </TopBar>
              <Desktop>
                <DesktopArt />
                <Dialog onSubmit={(e) => e.preventDefault()}>
                  <DialogHeader>
                    <DialogTitle>Select your timezone</DialogTitle>
                    <CloseButton type="button" $size={24} aria-label="Close dialog">
                      <svg viewBox="0 0 10 10"><path d="M1 1l8 8M9 1L1 9" stroke="#222" strokeWidth="1.200" /></svg>
                    </CloseButton>
                  </DialogHeader>
                  <Fields>
                    <Field>
                      <FieldInput id="location" defaultValue="Berlin (Berlin, Germany)" />
                      <FieldLabel htmlFor="location">Location</FieldLabel>
                    </Field>
                    <Field>
                      <FieldInput id="timezone" defaultValue="Europe/Berlin" />
                      <FieldLabel htmlFor="timezone">Timezone</FieldLabel>
                    </Field>
                  </Fields>
                  <WorldMap />
                  <Footer>
                    <ActionButton type="button">Back</ActionButton>
                    <Steps>
                      {Array.from({ length: 12 }, (_, i) => <Step key={i} $current={i === 10} />)}
                    </Steps>
                    <ActionButton type="submit" $filled>Next</ActionButton>
                  </Footer>
                </Dialog>
              </Desktop>
            </Screen>
          </Guest>
          <ScrollTrack $vertical>
            <Arrow dir="up" label="Scroll up" />
            <ScrollThumb />
            <ScrollGap $vertical />
            <Arrow dir="down" label="Scroll down" />
          </ScrollTrack>
          <ScrollTrack>
            <Arrow dir="left" label="Scroll left" />
            <ScrollThumb />
            <ScrollGap />
            <Arrow dir="right" label="Scroll right" />
          </ScrollTrack>
        </Viewport>
        <StatusBar>
          <StatusIcons />
          <HostKey>Right Ctrl</HostKey>
          <Grip viewBox="0 0 10 10" aria-hidden="true"><path d="M9 0v1M9 3v1M6 3.500h1M9 6v1M6 6.500h1M3 6.500h1M9 9v1M6 9.500h1M3 9.500h1M0 9.500h1" stroke="#aaa" /></Grip>
        </StatusBar>
      </Window>
    </Backdrop>
  );
}
